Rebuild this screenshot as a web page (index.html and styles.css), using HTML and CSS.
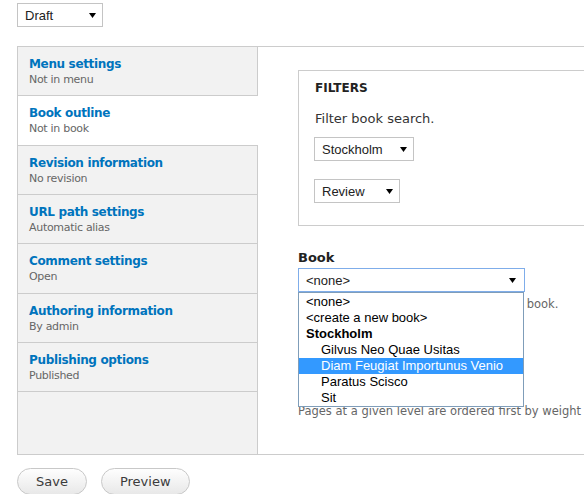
FILE: index.html
```html
<!DOCTYPE html>
<html>
<head>
<meta charset="utf-8">
<link rel="stylesheet" href="styles.css">
</head>
<body>
<div class="page">
  <div class="fake-select draft">
    <span>Draft</span>
    <svg class="arrow" width="7" height="5" viewBox="0 0 7 5"><path d="M0 0H7L3.5 5Z" fill="#000"/></svg>
  </div>

  <div class="vtabs">
    <ul class="tab-list">
      <li class="tab"><a class="tab-title">Menu settings</a><span class="tab-summary">Not in menu</span></li>
      <li class="tab selected"><a class="tab-title">Book outline</a><span class="tab-summary">Not in book</span></li>
      <li class="tab"><a class="tab-title">Revision information</a><span class="tab-summary">No revision</span></li>
      <li class="tab"><a class="tab-title">URL path settings</a><span class="tab-summary">Automatic alias</span></li>
      <li class="tab"><a class="tab-title">Comment settings</a><span class="tab-summary">Open</span></li>
      <li class="tab"><a class="tab-title">Authoring information</a><span class="tab-summary">By admin</span></li>
      <li class="tab"><a class="tab-title">Publishing options</a><span class="tab-summary">Published</span></li>
    </ul>
    <div class="pane">
      <fieldset class="filters">
        <div class="legend">Filters</div>
        <p class="filter-desc">Filter book search.</p>
        <div class="fake-select stockholm">
          <span>Stockholm</span>
          <svg class="arrow" width="7" height="5" viewBox="0 0 7 5"><path d="M0 0H7L3.5 5Z" fill="#000"/></svg>
        </div>
        <div class="fake-select review">
          <span>Review</span>
          <svg class="arrow" width="7" height="5" viewBox="0 0 7 5"><path d="M0 0H7L3.5 5Z" fill="#000"/></svg>
        </div>
      </fieldset>

      <div class="form-item book-item">
        <label class="label">Book</label>
        <div class="select-wrap">
          <div class="fake-select book focused">
            <span>&lt;none&gt;</span>
            <svg class="arrow" width="7" height="5" viewBox="0 0 7 5"><path d="M0 0H7L3.5 5Z" fill="#000"/></svg>
          </div>
          <ul class="dropdown">
            <li class="opt">&lt;none&gt;</li>
            <li class="opt">&lt;create a new book&gt;</li>
            <li class="opt group">Stockholm</li>
            <li class="opt sub">Gilvus Neo Quae Usitas</li>
            <li class="opt sub hl">Diam Feugiat Importunus Venio</li>
            <li class="opt sub">Paratus Scisco</li>
            <li class="opt sub">Sit</li>
          </ul>
        </div>
        <div class="desc">Your page will be a part of the selected book.</div>
      </div>

      <div class="form-item weight-item">
        <div class="weight-field"></div>
        <div class="desc nowrap">Pages at a given level are ordered first by weight and then by title.</div>
      </div>
    </div>
  </div>

  <div class="actions">
    <button class="btn">Save</button>
    <button class="btn">Preview</button>
  </div>
</div>
</body>
</html>
```

FILE: styles.css
```css
* { box-sizing: border-box; }
html, body { margin: 0; padding: 0; background: #fff; overflow: hidden; }
body { font-family: "DejaVu Sans", Verdana, sans-serif; color: #333; }
.page { padding: 3px 0 0 17px; width: 700px; }

.fake-select {
  display: flex;
  align-items: center;
  justify-content: space-between;
  height: 24px;
  border: 1px solid #c4c4c4;
  background: #fff;
  font-family: "Liberation Sans", Arial, sans-serif;
  font-size: 13px;
  color: #222;
  padding: 0 6px 0 7px;
}
.fake-select .arrow { flex: none; }
.draft { width: 86px; }

.vtabs {
  display: flex;
  margin-top: 19px;
  border-top: 1px solid #ccc;
  border-bottom: 1px solid #ccc;
  border-left: 1px solid #ccc;
  height: 409px;
}
.tab-list {
  list-style: none;
  margin: 0;
  padding: 0;
  width: 240px;
  flex: none;
  background: #f2f2f2;
  border-right: 1px solid #ccc;
}
.tab {
  display: flex;
  flex-direction: column;
  padding: 9px 11px 7.33px;
  border-bottom: 1px solid #ccc;
  height: 49.33px;
}
.tab.selected {
  background: #fff;
  margin-right: -1px;
}
.tab-title {
  font-weight: bold;
  font-size: 12px;
  letter-spacing: -0.35px;
  line-height: 16px;
  color: #0074bd;
}
.tab-summary {
  font-size: 11px;
  letter-spacing: -0.3px;
  line-height: 16px;
  color: #666;
}

.pane {
  flex: 1;
  padding: 23px 0 0 40px;
  min-width: 0;
}
.filters {
  margin: 0;
  border: 1px solid #ccc;
  padding: 9px 15px 21px;
  height: 156px;
  width: 320px;
}
.legend {
  font-weight: bold;
  text-transform: uppercase;
  font-size: 12px;
  line-height: 16px;
  color: #222;
  padding-left: 1px;
}
.filter-desc {
  margin: 15px 0 10px;
  font-size: 13px;
  line-height: 16px;
  color: #333;
  padding-left: 1px;
}
.stockholm { width: 100px; height: 24px; }
.review { width: 86px; height: 24px; margin-top: 18px; }

.book-item { margin-top: 24px; }
.label {
  display: block;
  font-weight: bold;
  font-size: 13px;
  line-height: 16px;
  color: #222;
  margin-bottom: 2px;
}
.select-wrap { position: relative; width: 227px; }
.book { width: 227px; padding-right: 8px; }
.book.focused { border-color: #7fadea; }
.dropdown {
  position: absolute;
  left: 0;
  top: 24px;
  width: 226px;
  margin: 0;
  padding: 1px 0 0;
  list-style: none;
  background: #fff;
  border: 1px solid #7f9db9;
  z-index: 5;
  font-family: "Liberation Sans", Arial, sans-serif;
  font-size: 13px;
  color: #000;
}
.opt { height: 16px; line-height: 16px; padding-left: 7px; white-space: nowrap; }
.opt.group { font-weight: bold; }
.opt.sub { padding-left: 22px; }
.opt.hl { background: #3399ff; color: #fff; }

.desc {
  font-size: 11.5px;
  line-height: 16px;
  color: #666;
  margin-top: 4px;
}
.nowrap { white-space: nowrap; }
.weight-item { margin-top: 20px; }
.weight-field { height: 42px; }
.weight-item .desc { margin-top: 29px; }

.actions {
  display: flex;
  gap: 14px;
  margin-top: 13px;
}
.btn {
  font-family: "DejaVu Sans", Verdana, sans-serif;
  font-size: 13px;
  color: #3b3b3b;
  height: 27px;
  padding: 0 18px;
  border: 1px solid #c8c8c8;
  border-radius: 20px;
  background: linear-gradient(#fefefe, #e8e8e8);
}
```
